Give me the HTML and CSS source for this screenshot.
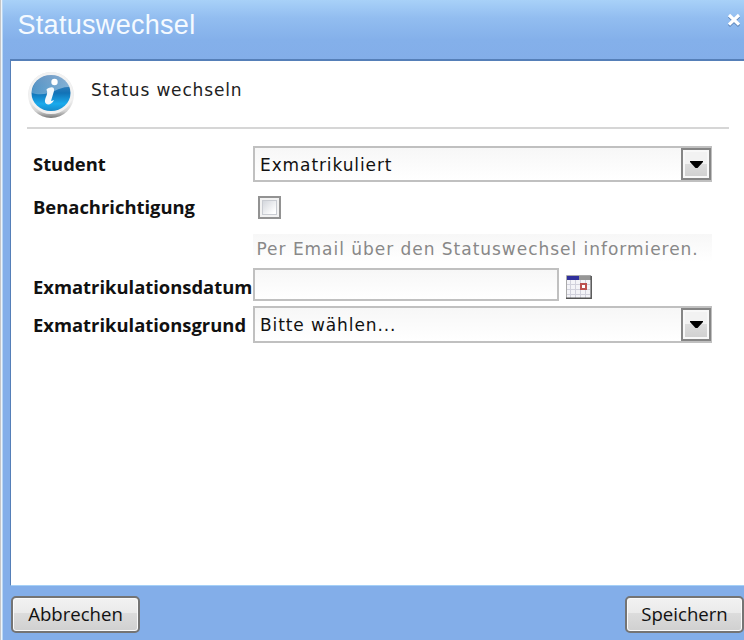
FILE: index.html
```html
<!DOCTYPE html>
<html lang="de">
<head>
<meta charset="utf-8">
<title>Statuswechsel</title>
<link rel="stylesheet" href="styles.css">
</head>
<body>
<div class="dialog">
  <header class="titlebar">
    <h1 class="title">Statuswechsel</h1>
    <svg class="close" width="16" height="17" viewBox="0 0 16 17"><path d="M3 4.5 13 14M13 4.5 3 14" stroke="#5e85b9" stroke-width="3"/><path d="M3 3 13 12.6M13 3 3 12.6" stroke="#fff" stroke-width="3.2"/></svg>
  </header>
  <main class="panel">
    <section class="intro">
      <svg class="info" width="50" height="50" viewBox="0 0 50 50">
        <defs>
          <linearGradient id="rim" x1="0" y1="0" x2="0" y2="1"><stop offset="0" stop-color="#e6e6e8"/><stop offset=".6" stop-color="#f0f0f0"/><stop offset=".85" stop-color="#d2d2d2"/><stop offset="1" stop-color="#777"/></linearGradient>
          <linearGradient id="blue" x1="0" y1="0" x2="0" y2="1"><stop offset="0" stop-color="#5f8fbf"/><stop offset=".5" stop-color="#1272b6"/><stop offset=".8" stop-color="#1aabed"/><stop offset="1" stop-color="#168acb"/></linearGradient>
          <linearGradient id="gloss" x1="0" y1="0" x2="1" y2="1"><stop offset="0" stop-color="#fff" stop-opacity=".05"/><stop offset="1" stop-color="#fff" stop-opacity=".5"/></linearGradient>
        </defs>
        <ellipse cx="24" cy="25" rx="23" ry="23" fill="url(#rim)"/>
        <ellipse cx="24" cy="23" rx="22" ry="21" fill="#f2f2f2"/>
        <ellipse cx="24" cy="23" rx="19.5" ry="18" fill="url(#blue)"/>
        <path d="M4.500 23C6 12 14 5 24 5s17 6 18.500 12c-12-1-20 11-38 6Z" fill="url(#gloss)"/>
        <circle cx="27.500" cy="12" r="3.200" fill="#fff"/>
        <path d="M20 19c3-2 8-3 7 2l-3 10c2 0 2-1 3-1-2 5-8 6-9 2-.5-4 3-7 2-11-.2-1-1-1-0-2Z" fill="#f3f8fb"/>
      </svg>
      <p class="intro-text">Status wechseln</p>
    </section>
    <form class="form">
      <div class="row row-status">
        <span class="label label-student">Student</span>
        <div class="select"><span class="value">Exmatrikuliert</span><span class="arrow"><svg width="13" height="7" viewBox="0 0 13 7"><path d="M0 0h13v1L7.5 7h-2L0 1Z"/></svg></span></div>
      </div>
      <div class="row row-check">
        <span class="label label-notify">Benachrichtigung</span>
        <span class="checkbox"></span>
      </div>
      <p class="hint">Per Email über den Statuswechsel informieren.</p>
      <div class="row row-date">
        <span class="label label-date">Exmatrikulationsdatum</span>
        <span class="input"></span>
        <svg class="calendar" width="26" height="24" viewBox="0 0 26 24"><path fill="#f4f4f8" d="M0 0h26v24H0z"/><path stroke="#d1d1dc" d="M1 9.5h23M1 14.5h23M1 19.5h23M4.5 5v18M9.5 5v18M14.5 5v18M19.5 5v18"/><path fill="#30309c" d="M1 1h12v4H1z"/><path fill="#969696" d="M13 1h12v4H13z"/><path fill="#fff" stroke="#bc5050" stroke-width="2" d="M15 9h5v5h-5z"/><path stroke="#aaa" fill="none" d="M.5 23V.5H25"/><path stroke="#555" stroke-width="1.5" fill="none" d="M0 23.2h25.2V1"/></svg>
      </div>
      <div class="row row-reason">
        <span class="label label-reason">Exmatrikulationsgrund</span>
        <div class="select"><span class="value">Bitte wählen...</span><span class="arrow"><svg width="13" height="7" viewBox="0 0 13 7"><path d="M0 0h13v1L7.5 7h-2L0 1Z"/></svg></span></div>
      </div>
    </form>
  </main>
  <footer class="actions">
    <button class="button cancel" type="button">Abbrechen</button>
    <button class="button save" type="button">Speichern</button>
  </footer>
</div>
</body>
</html>
```
FILE: styles.css
```css
* { box-sizing: border-box; }
body { margin: 0; overflow: hidden; }
h1, p { margin: 0; }
.dialog {
  display: flex;
  flex-direction: column;
  height: 640px;
  padding-left: 7px;
  border-left: 1px solid #c6c6c6;
  box-shadow: inset 1px 0 #edf4fb, inset 2px 0 #b9d7f4;
  background: linear-gradient(#a8d1f8, #92bdf0 18px, #84b0ea 40px, #83aee9 60px);
  font-family: "DejaVu Sans", sans-serif;
}
.titlebar {
  display: flex;
  justify-content: space-between;
  height: 59px;
  padding: 9px 2px 0 9.5px;
}
.title {
  font: 27px/32px "Liberation Sans", sans-serif;
  letter-spacing: .3px;
  color: #f5faff;
}
.close { margin-top: 3px; }
.panel {
  height: 527px;
  margin-left: 2px;
  padding: 12px 15px 0 16px;
  border: solid #557fb8;
  border-width: 2px 0 0 1px;
  border-bottom: 1px solid #a5d0f7;
  background: #fff;
}
.intro {
  display: flex;
  height: 56px;
  border-bottom: 2px solid #d6d6d6;
}
.info { margin-top: -3px; }
.intro-text {
  margin: 6px 0 0 14px;
  font-size: 17px;
  line-height: 22px;
  letter-spacing: .83px;
  color: #222;
  white-space: nowrap;
}
.form { padding: 17px 17px 0 6px; }
.row { display: flex; }
.row-status { height: 50px; }
.row-check { height: 38px; }
.row-date { height: 38px; }
.label {
  flex: 0 0 220px;
  font: bold 18.4px/24px "Open Sans", sans-serif;
  color: #111;
  white-space: nowrap;
}
.label-notify { margin-top: -1px; }
.label-student { padding-top: 6px; }
.label-date, .label-reason { padding-top: 7px; }
.select {
  display: flex;
  flex: 1;
  justify-content: space-between;
  height: 37px;
  padding: 0 0 0 5px;
  border: 2px solid #c0c0c0;
  background: linear-gradient(#f7f7f7, #fff);
}
.row-status .select { height: 36px; }
.value {
  padding-top: 1px;
  font-size: 17px;
  line-height: 32px;
  letter-spacing: .9px;
  color: #111;
  white-space: nowrap;
}
.arrow {
  display: flex;
  align-items: center;
  justify-content: center;
  width: 30px;
  margin-right: -1px;
  border: 2px solid #858585;
  box-shadow: inset 0 0 0 2px #f8f8f8;
  background: linear-gradient(#f2f2f2 50%, #dcdcdc 50%, #cfcfcf);
}
.checkbox {
  width: 23px;
  height: 23px;
  margin-left: 5px;
  border: 2px solid #929292;
  box-shadow: inset 0 0 0 2px #f2f2f2, inset 0 0 0 3px #c9ccd2;
  background: linear-gradient(135deg, #c8ccd4, #fff 75%);
}
.hint {
  height: 34px;
  margin-left: 220px;
  padding: 4px 0 0 3.5px;
  background: linear-gradient(#f7f7f7, #fff 28px);
  font-size: 17px;
  line-height: 22px;
  letter-spacing: .97px;
  color: #888;
  white-space: nowrap;
}
.input {
  width: 306px;
  height: 33px;
  border: 2px solid #c0c0c0;
  background: linear-gradient(#f7f7f7, #fff);
}
.calendar { margin: 7px 0 0 7px; }
.actions {
  display: flex;
  justify-content: space-between;
  padding: 10px 0 0 3px;
}
.button {
  height: 37px;
  padding: 0 0 2px;
  border: 2px solid #747474;
  border-radius: 5px;
  box-shadow: inset 0 0 0 1px #fafafa;
  background: linear-gradient(#f2f2f2, #eaeaea 45%, #dcdcdc 46%, #d0d0d0);
  font: 18.6px/24px "Open Sans", sans-serif;
  color: #111;
}
.cancel { width: 129px; }
.save { width: 119px; }
```
